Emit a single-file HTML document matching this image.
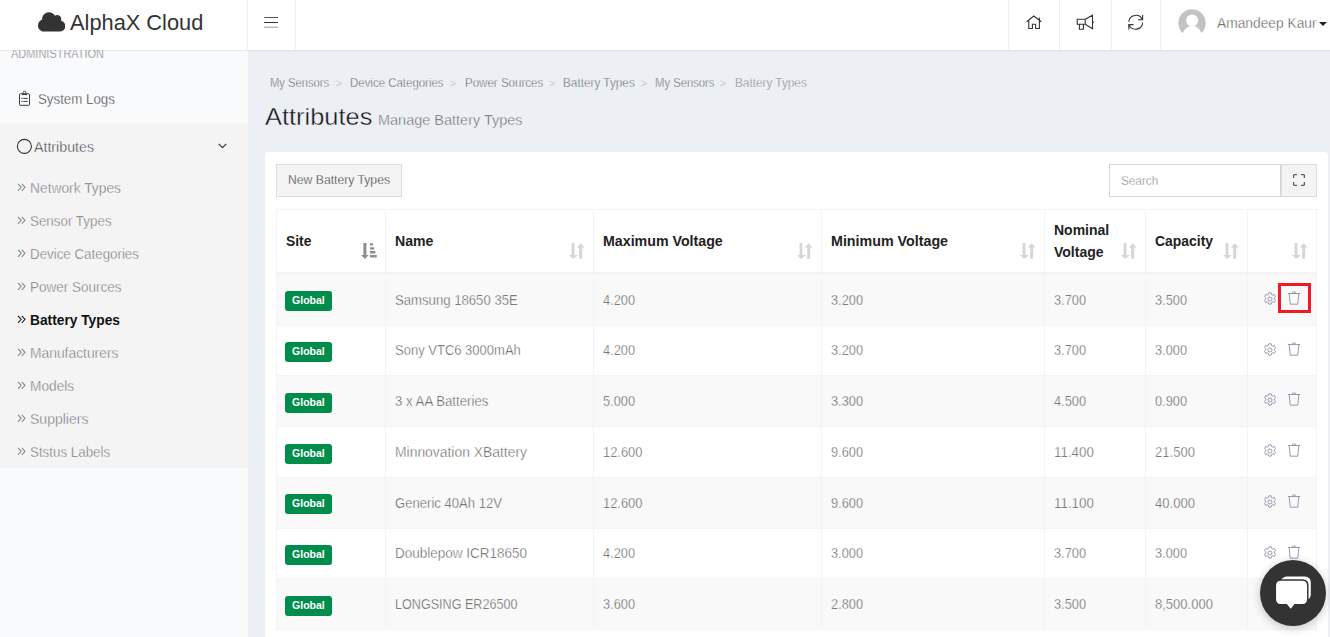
<!DOCTYPE html>
<html lang="en">
<head>
<meta charset="utf-8">
<title>AlphaX Cloud - Battery Types</title>
<style>
*{box-sizing:border-box;margin:0;padding:0}
html,body{width:1330px;height:637px;overflow:hidden}
body{font-family:"Liberation Sans",sans-serif;background:#ecf0f5;color:#333;position:relative}
.s{display:inline-block;transform-origin:0 50%;white-space:nowrap}
/* header */
#hdr{position:absolute;left:0;top:0;width:1330px;height:50px;background:#fff;z-index:5;box-shadow:0 1px 1px rgba(0,0,0,.06)}
#logo{position:absolute;left:0;top:0;width:248px;height:50px;border-right:1px solid #eee}
#logo .txt{position:absolute;left:70px;top:9.500px;font-size:22px;line-height:26px;color:#333;white-space:nowrap}
#logo svg{position:absolute;left:37.500px;top:10.500px}
.hb{position:absolute;top:0;height:50px;border-right:1px solid #eee}
.hl{border-left:1px solid #eee;border-right:none}
.hb svg{position:absolute}
#user{position:absolute;left:1160px;top:0;width:170px;height:50px;border-left:1px solid #eee}
#user .av{position:absolute;left:16.5px;top:8.700px}
#user .nm{position:absolute;left:55.6px;top:12.500px;font-size:14px;line-height:20px;color:#3c3c3c;-webkit-text-stroke:.42px #fff}
#user .caret{position:absolute;left:157.6px;top:21.8px;width:0;height:0;border-left:4.7px solid transparent;border-right:4.7px solid transparent;border-top:4.7px solid #222}
/* sidebar */
#side{position:absolute;left:0;top:50px;width:248px;height:587px;background:#f9fafc;overflow:hidden}
#side .sec{position:absolute;left:11px;top:-3.5px;font-size:12px;line-height:14px;color:#6a6a6a;-webkit-text-stroke:.4px #f9fafc}
#side .act{position:absolute;left:0;top:73px;width:248px;height:345px;background:#f4f4f5}
#side .it{position:absolute;left:0;font-size:15px;line-height:20px;color:#303030;white-space:nowrap;-webkit-text-stroke:.38px #f9fafc}
#side .sub{position:absolute;left:30px;font-size:15px;line-height:20px;color:#646464;white-space:nowrap;-webkit-text-stroke:.45px #f4f4f5}
#side .sub.on{color:#111;font-weight:bold;-webkit-text-stroke:0}
#side .ch{position:absolute;left:17px;font-size:15px;line-height:20px;color:#585858;-webkit-text-stroke:.45px #ecf0f5}
/* content */
#bc{position:absolute;left:0;top:74px;font-size:13px;line-height:18px;color:#484848;white-space:nowrap;-webkit-text-stroke:.45px #ecf0f5}
#bc .bi{position:absolute;top:0}
#bc .sep{color:#999;font-size:11px}
#bc .last{color:#6c6c6c}
#ttl{position:absolute;left:0;top:0;white-space:nowrap;color:#222}
#ttl .t1{position:absolute;left:264.500px;top:103px;font-size:24px;line-height:28px;-webkit-text-stroke:.4px #ecf0f5;color:#111}
#ttl .t2{position:absolute;left:378.400px;top:110px;font-size:15px;line-height:20px;color:#585858;-webkit-text-stroke:.45px #ecf0f5}
#card{position:absolute;left:265px;top:152px;width:1063px;height:500px;background:#fff;border-radius:3px}
#btn{position:absolute;left:276px;top:164px;width:126px;height:33px;background:#f4f4f4;border:1px solid #ddd;font-size:13px;line-height:30px;color:#333;text-align:left;padding-left:11px;-webkit-text-stroke:.3px #f4f4f4}
#srch{position:absolute;left:1109px;top:164px;width:172px;height:33px;background:#fff;border:1px solid #d2d6de;font-size:13px;line-height:31px;color:#777;padding-left:11px;-webkit-text-stroke:.4px #fff}
#fsb{position:absolute;left:1281px;top:164px;width:36px;height:33px;background:#f4f4f4;border:1px solid #ddd}

/* table */
#tbl{position:absolute;left:276px;top:209px;width:1041px;border-collapse:separate;border-spacing:0;table-layout:fixed;border-right:1px solid #f4f4f4;border-bottom:1px solid #f4f4f4;font-size:14px;color:#777}
#tbl th,#tbl td{border-left:1px solid #f4f4f4;border-top:1px solid #f4f4f4;text-align:left;position:relative;overflow:hidden;white-space:nowrap}
#tbl th{height:65px;border-bottom:2px solid #f4f4f4;padding:0 0 0 9px;vertical-align:middle;font-weight:bold;font-size:14px;line-height:22px;color:#222}
#tbl td{height:51px;line-height:20px;padding:15px 0 0 9px;vertical-align:top}
#tbl tr.r50 td{height:50px;padding-top:14px}
#tbl tr.r50 .bdg,#tbl tr.b2 .bdg{margin-top:2px}
#tbl td{color:#424242;-webkit-text-stroke:.45px #fff}
#tbl tbody tr:nth-child(odd) td{background:#f9f9f9;-webkit-text-stroke-color:#f9f9f9}
.bdg{-webkit-text-stroke:0}
#tbl th svg{position:absolute;right:8.3px;top:33.3px}
.bdg{display:block;width:47px;height:20px;margin:1px 0 0 -1.5px;background:#008d4c;border-radius:3px;color:#fff;font-weight:bold;font-size:10.5px;line-height:19px;text-align:left;padding-left:7.5px}
.ic{position:absolute;top:16.9px}
#hl{position:absolute;left:1278px;top:283px;width:33px;height:30px;border:3px solid #ed1c24}
#chat{position:absolute;left:1260px;top:560px;width:66px;height:66px;border-radius:50%;background:#333;box-shadow:0 2px 10px rgba(0,0,0,.22);z-index:9}
#chat svg{position:absolute;left:0;top:0}
</style>
</head>
<body>
<div id="hdr">
  <div id="logo">
    <svg width="27.400" height="21.920" viewBox="0 0 640 512"><path fill="#333" d="M537.600 226.600c4.100-10.700 6.400-22.400 6.400-34.600 0-53-43-96-96-96-19.700 0-38.100 6-53.300 16.200C367 64.200 315.300 32 256 32c-88.400 0-160 71.600-160 160 0 2.700.1 5.400.2 8.100C40.200 219.800 0 273.200 0 336c0 79.500 64.500 144 144 144h368c70.700 0 128-57.300 128-128 0-61.900-44-113.600-102.400-125.400z"/></svg>
    <div class="txt"><span class="s" style="transform:scaleX(0.991)">AlphaX Cloud</span></div>
  </div>
  <div class="hb" style="left:248px;width:48px"><svg style="left:16px;top:16px" width="14" height="13" viewBox="0 0 14 13"><rect x=".2" y="1" width="13.800" height="1" fill="#555"/><rect x=".2" y="6" width="13.800" height="1" fill="#333"/><rect x=".2" y="10.700" width="13.800" height="1" fill="#999"/></svg></div>
  <div class="hb hl" style="left:1008px;width:51px"></div>
  <div class="hb hl" style="left:1059px;width:52px"></div>
  <div class="hb hl" style="left:1111px;width:50px"></div>
<svg style="position:absolute;left:1010px;top:0" width="150" height="50" viewBox="1010 0 150 50" fill="none" stroke="#333" stroke-width="1.100" stroke-linejoin="miter">
<path d="M1026.600 21.700L1033.800 16l7.400 5.700M1028.800 20.300v8.200h3.600v-4.200h3.200v4.200h3.800v-8.200M1039.300 20v-2.600"/>
<path d="M1077.200 19.300h8v5h-8zM1085.200 19.300l7.300-4v13.500l-7.300-4.500M1079.400 24.400v4.800h4v-4.800M1092.600 21.400q1.400 .7 0 1.500"/>
<path d="M1128.800 21.800A7.100 7.100 0 0 1 1142.300 19.400M1142.600 15.100V19.800H1138M1142.700 22.600A7.100 7.100 0 0 1 1129.100 24.900M1128.800 29.500V24.600H1133.500"/>
</svg>
  <div id="user"><svg class="av" width="28" height="28" viewBox="0 0 28 28"><circle cx="14" cy="14" r="13.700" fill="#c3c3c3"/><g fill="#fff"><circle cx="14.100" cy="11.400" r="6"/><ellipse cx="14.100" cy="28.600" rx="10.300" ry="11.600"/></g></svg><div class="nm"><span class="s" style="transform:scaleX(0.984)">Amandeep Kaur</span></div><div class="caret"></div></div>
</div>
<div id="side">
  <div class="sec"><span class="s" style="transform:scaleX(0.914)">ADMINISTRATION</span></div>
  <div class="act"></div>

  <div class="it" style="left:38px;top:39px"><span class="s" style="transform:scaleX(0.886)">System Logs</span></div>
  <svg style="position:absolute;left:18px;top:40px" width="13" height="17" viewBox="0 0 13 17" fill="none" stroke="#3d3d3d" stroke-width="1"><rect x="1.5" y="3.8" width="10" height="11.5" rx=".8"/><path d="M5 3.800V2.700Q5 1.300 6.500 1.300T8 2.700V3.800" stroke-width=".9"/><path d="M4 4.400h5" stroke-width="1.300"/><path d="M3.200 8.400h1.300M5.300 8.400h4.400M3.200 11.400h1.300M5.300 11.400h4.400" stroke-width="1"/></svg>
  <svg style="position:absolute;left:16px;top:88px" width="17" height="17" viewBox="0 0 17 17" fill="none" stroke="#333" stroke-width="1.100"><circle cx="8.400" cy="8.400" r="7"/></svg>
  <div class="it" style="left:34px;top:87px"><span class="s" style="transform:scaleX(0.947)">Attributes</span></div>
  <svg style="position:absolute;left:218px;top:93px" width="9" height="6" viewBox="0 0 9 6" fill="none" stroke="#333" stroke-width="1.200"><path d="M.7 .8l3.800 3.800 3.800-3.800"/></svg>
  <svg style="position:absolute;left:17px;top:133px" width="9" height="9" viewBox="0 0 9 9" fill="none" stroke="#8a8a8a" stroke-width="1.100"><path d="M1 .8l3.200 3.500L1 7.800M4.800 .8L8 4.300 4.800 7.800"/></svg>
  <div class="sub" style="top:128px"><span class="s" style="transform:scaleX(0.920)">Network Types</span></div>
  <svg style="position:absolute;left:17px;top:166px" width="9" height="9" viewBox="0 0 9 9" fill="none" stroke="#8a8a8a" stroke-width="1.100"><path d="M1 .8l3.200 3.500L1 7.800M4.800 .8L8 4.300 4.800 7.800"/></svg>
  <div class="sub" style="top:161px"><span class="s" style="transform:scaleX(0.892)">Sensor Types</span></div>
  <svg style="position:absolute;left:17px;top:199px" width="9" height="9" viewBox="0 0 9 9" fill="none" stroke="#8a8a8a" stroke-width="1.100"><path d="M1 .8l3.200 3.500L1 7.800M4.800 .8L8 4.300 4.800 7.800"/></svg>
  <div class="sub" style="top:194px"><span class="s" style="transform:scaleX(0.889)">Device Categories</span></div>
  <svg style="position:absolute;left:17px;top:232px" width="9" height="9" viewBox="0 0 9 9" fill="none" stroke="#8a8a8a" stroke-width="1.100"><path d="M1 .8l3.200 3.500L1 7.800M4.800 .8L8 4.300 4.800 7.800"/></svg>
  <div class="sub" style="top:227px"><span class="s" style="transform:scaleX(0.899)">Power Sources</span></div>
  <svg style="position:absolute;left:17px;top:265px" width="9" height="9" viewBox="0 0 9 9" fill="none" stroke="#222" stroke-width="1.100"><path d="M1 .8l3.200 3.500L1 7.800M4.800 .8L8 4.300 4.800 7.800"/></svg>
  <div class="sub on" style="top:260px"><span class="s" style="transform:scaleX(0.917)">Battery Types</span></div>
  <svg style="position:absolute;left:17px;top:298px" width="9" height="9" viewBox="0 0 9 9" fill="none" stroke="#8a8a8a" stroke-width="1.100"><path d="M1 .8l3.200 3.500L1 7.800M4.800 .8L8 4.300 4.800 7.800"/></svg>
  <div class="sub" style="top:293px"><span class="s" style="transform:scaleX(0.922)">Manufacturers</span></div>
  <svg style="position:absolute;left:17px;top:331px" width="9" height="9" viewBox="0 0 9 9" fill="none" stroke="#8a8a8a" stroke-width="1.100"><path d="M1 .8l3.200 3.500L1 7.800M4.800 .8L8 4.300 4.800 7.800"/></svg>
  <div class="sub" style="top:326px"><span class="s" style="transform:scaleX(0.914)">Models</span></div>
  <svg style="position:absolute;left:17px;top:364px" width="9" height="9" viewBox="0 0 9 9" fill="none" stroke="#8a8a8a" stroke-width="1.100"><path d="M1 .8l3.200 3.500L1 7.800M4.800 .8L8 4.300 4.800 7.800"/></svg>
  <div class="sub" style="top:359px"><span class="s" style="transform:scaleX(0.935)">Suppliers</span></div>
  <svg style="position:absolute;left:17px;top:397px" width="9" height="9" viewBox="0 0 9 9" fill="none" stroke="#8a8a8a" stroke-width="1.100"><path d="M1 .8l3.200 3.500L1 7.800M4.800 .8L8 4.300 4.800 7.800"/></svg>
  <div class="sub" style="top:392px"><span class="s" style="transform:scaleX(0.890)">Ststus Labels</span></div>
</div>
<div id="bc"><span class="bi" style="left:270.4px"><span class="s" style="transform:scaleX(0.862)">My Sensors</span></span><span class="bi sep" style="left:336px"><span class="s" style="transform:scaleX(0.932)">&gt;</span></span><span class="bi" style="left:350.4px"><span class="s" style="transform:scaleX(0.881)">Device Categories</span></span><span class="bi sep" style="left:450px"><span class="s" style="transform:scaleX(0.932)">&gt;</span></span><span class="bi" style="left:464.5px"><span class="s" style="transform:scaleX(0.887)">Power Sources</span></span><span class="bi sep" style="left:548.8px"><span class="s" style="transform:scaleX(0.932)">&gt;</span></span><span class="bi" style="left:563.2px"><span class="s" style="transform:scaleX(0.906)">Battery Types</span></span><span class="bi sep" style="left:640.6px"><span class="s" style="transform:scaleX(0.932)">&gt;</span></span><span class="bi" style="left:655.4px"><span class="s" style="transform:scaleX(0.867)">My Sensors</span></span><span class="bi sep" style="left:720.3px"><span class="s" style="transform:scaleX(0.932)">&gt;</span></span><span class="bi last" style="left:735.4px"><span class="s" style="transform:scaleX(0.906)">Battery Types</span></span></div>
<div id="ttl"><span class="s t1" style="transform:scaleX(1.059)">Attributes</span><span class="s t2" style="transform:scaleX(0.965)">Manage Battery Types</span></div>
<div id="card"></div>
<div id="btn"><span class="s" style="transform:scaleX(0.937)">New Battery Types</span></div>
<div id="srch"><span class="s" style="transform:scaleX(0.903)">Search</span></div>
<div id="fsb"><svg style="position:absolute;left:10.700px;top:9.200px" width="12" height="12" viewBox="0 0 12 12" fill="none" stroke="#3a3a3a" stroke-width="1"><path d="M.7 4V.7H4M8 .7h3.300V4M11.300 8v3.300H8M4 11.300H.7V8"/></svg></div>
<table id="tbl"><colgroup><col style="width:109px"><col style="width:208px"><col style="width:228px"><col style="width:223px"><col style="width:101px"><col style="width:102px"><col style="width:69px"></colgroup>
<thead><tr><th><span class="s" style="transform:scaleX(0.989)">Site</span><svg style="right:7.700px;top:33.400px" width="16" height="16" viewBox="0 0 16 16" fill="#8e8e8e"><path d="M2.400 0h3v12h2.300L3.900 16 0 12h2.400zM9 .2h3v2.200H9zM9 4.200h4.200v2.200H9zM9 8.100h5.300v2.300H9zM9 12.100h6.800v2.500H9z"/></svg></th><th><span class="s" style="transform:scaleX(1.007)">Name</span><svg width="16" height="16" viewBox="0 0 16 16" fill="#d6d6d6"><path d="M2.600 0h2.800v12H9l-4.900 4L0 12h2.600zM7.800 4.500L11.700 .2l3.900 4.300H13.200V15.700H10.200V4.500z"/></svg></th><th><span class="s" style="transform:scaleX(1.015)">Maximum Voltage</span><svg width="16" height="16" viewBox="0 0 16 16" fill="#d6d6d6"><path d="M2.600 0h2.800v12H9l-4.900 4L0 12h2.600zM7.800 4.500L11.700 .2l3.900 4.300H13.200V15.700H10.200V4.500z"/></svg></th><th><span class="s" style="transform:scaleX(1.019)">Minimum Voltage</span><svg width="16" height="16" viewBox="0 0 16 16" fill="#d6d6d6"><path d="M2.600 0h2.800v12H9l-4.900 4L0 12h2.600zM7.800 4.500L11.700 .2l3.900 4.300H13.200V15.700H10.200V4.500z"/></svg></th><th><span class="s" style="transform:scaleX(1.000)">Nominal<br>Voltage</span><svg width="16" height="16" viewBox="0 0 16 16" fill="#d6d6d6"><path d="M2.600 0h2.800v12H9l-4.900 4L0 12h2.600zM7.800 4.500L11.700 .2l3.900 4.300H13.200V15.700H10.200V4.500z"/></svg></th><th><span class="s" style="transform:scaleX(0.994)">Capacity</span><svg width="16" height="16" viewBox="0 0 16 16" fill="#d6d6d6"><path d="M2.600 0h2.800v12H9l-4.900 4L0 12h2.600zM7.800 4.500L11.700 .2l3.900 4.300H13.200V15.700H10.200V4.500z"/></svg></th><th><span class="s" style="transform:scaleX(1.000)"></span><svg width="16" height="16" viewBox="0 0 16 16" fill="#d6d6d6"><path d="M2.600 0h2.800v12H9l-4.900 4L0 12h2.600zM7.800 4.500L11.700 .2l3.900 4.300H13.200V15.700H10.200V4.500z"/></svg></th></tr></thead>
<tbody>
<tr><td><span class="bdg"><span class="s" style="transform:scaleX(1.004)">Global</span></span></td><td><span class="s" style="transform:scaleX(0.939)">Samsung 18650 35E</span></td><td><span class="s" style="transform:scaleX(0.914)">4.200</span></td><td><span class="s" style="transform:scaleX(0.914)">3.200</span></td><td><span class="s" style="transform:scaleX(0.914)">3.700</span></td><td><span class="s" style="transform:scaleX(0.914)">3.500</span></td><td><svg class="ic" style="left:15px" width="14" height="14" viewBox="0 0 14 14" fill="none" stroke="#8b90a8" stroke-width=".9"><circle cx="7" cy="7" r="2"/><path d="M5.800 .8h2.400l.4 1.700 1.100 .6 1.600-.6 1.200 2.100-1.200 1.200v1.300l1.200 1.200-1.200 2.100-1.600-.6-1.100 .6-.4 1.700H5.800l-.4-1.700-1.100-.6-1.600 .6-1.200-2.100 1.200-1.200V5.800L1.500 4.600l1.200-2.100 1.600 .6 1.100-.6z"/></svg><svg class="ic" style="left:39px;top:16px" width="14" height="14" viewBox="0 0 14 14" fill="none" stroke="#8b90a8" stroke-width=".9"><path d="M1 2.500h12M5.200 2.300Q5.200 .9 7 .9T8.800 2.300M2.200 2.600l1 10.600h7.600l1-10.600"/></svg></td></tr>
<tr class="r50"><td><span class="bdg"><span class="s" style="transform:scaleX(1.004)">Global</span></span></td><td><span class="s" style="transform:scaleX(0.929)">Sony VTC6 3000mAh</span></td><td><span class="s" style="transform:scaleX(0.914)">4.200</span></td><td><span class="s" style="transform:scaleX(0.914)">3.200</span></td><td><span class="s" style="transform:scaleX(0.914)">3.700</span></td><td><span class="s" style="transform:scaleX(0.914)">3.000</span></td><td><svg class="ic" style="left:15px" width="14" height="14" viewBox="0 0 14 14" fill="none" stroke="#8b90a8" stroke-width=".9"><circle cx="7" cy="7" r="2"/><path d="M5.800 .8h2.400l.4 1.700 1.100 .6 1.600-.6 1.200 2.100-1.200 1.200v1.300l1.200 1.200-1.200 2.100-1.600-.6-1.100 .6-.4 1.700H5.800l-.4-1.700-1.100-.6-1.600 .6-1.200-2.100 1.200-1.200V5.800L1.500 4.600l1.200-2.100 1.600 .6 1.100-.6z"/></svg><svg class="ic" style="left:39px;top:16px" width="14" height="14" viewBox="0 0 14 14" fill="none" stroke="#8b90a8" stroke-width=".9"><path d="M1 2.500h12M5.200 2.300Q5.200 .9 7 .9T8.800 2.300M2.200 2.600l1 10.600h7.600l1-10.600"/></svg></td></tr>
<tr class="b2"><td><span class="bdg"><span class="s" style="transform:scaleX(1.004)">Global</span></span></td><td><span class="s" style="transform:scaleX(0.945)">3 x AA Batteries</span></td><td><span class="s" style="transform:scaleX(0.914)">5.000</span></td><td><span class="s" style="transform:scaleX(0.914)">3.300</span></td><td><span class="s" style="transform:scaleX(0.914)">4.500</span></td><td><span class="s" style="transform:scaleX(0.914)">0.900</span></td><td><svg class="ic" style="left:15px" width="14" height="14" viewBox="0 0 14 14" fill="none" stroke="#8b90a8" stroke-width=".9"><circle cx="7" cy="7" r="2"/><path d="M5.800 .8h2.400l.4 1.700 1.100 .6 1.600-.6 1.200 2.100-1.200 1.200v1.300l1.200 1.200-1.200 2.100-1.600-.6-1.100 .6-.4 1.700H5.800l-.4-1.700-1.100-.6-1.600 .6-1.200-2.100 1.200-1.200V5.800L1.500 4.600l1.200-2.100 1.600 .6 1.100-.6z"/></svg><svg class="ic" style="left:39px;top:16px" width="14" height="14" viewBox="0 0 14 14" fill="none" stroke="#8b90a8" stroke-width=".9"><path d="M1 2.500h12M5.200 2.300Q5.200 .9 7 .9T8.800 2.300M2.200 2.600l1 10.600h7.600l1-10.600"/></svg></td></tr>
<tr class="b2"><td><span class="bdg"><span class="s" style="transform:scaleX(1.004)">Global</span></span></td><td><span class="s" style="transform:scaleX(0.992)">Minnovation XBattery</span></td><td><span class="s" style="transform:scaleX(0.922)">12.600</span></td><td><span class="s" style="transform:scaleX(0.914)">9.600</span></td><td><span class="s" style="transform:scaleX(0.955)">11.400</span></td><td><span class="s" style="transform:scaleX(0.932)">21.500</span></td><td><svg class="ic" style="left:15px" width="14" height="14" viewBox="0 0 14 14" fill="none" stroke="#8b90a8" stroke-width=".9"><circle cx="7" cy="7" r="2"/><path d="M5.800 .8h2.400l.4 1.700 1.100 .6 1.600-.6 1.200 2.100-1.200 1.200v1.300l1.200 1.200-1.200 2.100-1.600-.6-1.100 .6-.4 1.700H5.800l-.4-1.700-1.100-.6-1.600 .6-1.200-2.100 1.200-1.200V5.800L1.500 4.600l1.200-2.100 1.600 .6 1.100-.6z"/></svg><svg class="ic" style="left:39px;top:16px" width="14" height="14" viewBox="0 0 14 14" fill="none" stroke="#8b90a8" stroke-width=".9"><path d="M1 2.500h12M5.200 2.300Q5.200 .9 7 .9T8.800 2.300M2.200 2.600l1 10.600h7.600l1-10.600"/></svg></td></tr>
<tr><td><span class="bdg"><span class="s" style="transform:scaleX(1.004)">Global</span></span></td><td><span class="s" style="transform:scaleX(0.935)">Generic 40Ah 12V</span></td><td><span class="s" style="transform:scaleX(0.922)">12.600</span></td><td><span class="s" style="transform:scaleX(0.914)">9.600</span></td><td><span class="s" style="transform:scaleX(0.955)">11.100</span></td><td><span class="s" style="transform:scaleX(0.932)">40.000</span></td><td><svg class="ic" style="left:15px" width="14" height="14" viewBox="0 0 14 14" fill="none" stroke="#8b90a8" stroke-width=".9"><circle cx="7" cy="7" r="2"/><path d="M5.800 .8h2.400l.4 1.700 1.100 .6 1.600-.6 1.200 2.100-1.200 1.200v1.300l1.200 1.200-1.200 2.100-1.600-.6-1.100 .6-.4 1.700H5.800l-.4-1.700-1.100-.6-1.600 .6-1.200-2.100 1.200-1.200V5.800L1.500 4.600l1.200-2.100 1.600 .6 1.100-.6z"/></svg><svg class="ic" style="left:39px;top:16px" width="14" height="14" viewBox="0 0 14 14" fill="none" stroke="#8b90a8" stroke-width=".9"><path d="M1 2.500h12M5.200 2.300Q5.200 .9 7 .9T8.800 2.300M2.200 2.600l1 10.600h7.600l1-10.600"/></svg></td></tr>
<tr class="r50"><td><span class="bdg"><span class="s" style="transform:scaleX(1.004)">Global</span></span></td><td><span class="s" style="transform:scaleX(0.964)">Doublepow ICR18650</span></td><td><span class="s" style="transform:scaleX(0.914)">4.200</span></td><td><span class="s" style="transform:scaleX(0.914)">3.000</span></td><td><span class="s" style="transform:scaleX(0.914)">3.700</span></td><td><span class="s" style="transform:scaleX(0.914)">3.000</span></td><td><svg class="ic" style="left:15px" width="14" height="14" viewBox="0 0 14 14" fill="none" stroke="#8b90a8" stroke-width=".9"><circle cx="7" cy="7" r="2"/><path d="M5.800 .8h2.400l.4 1.700 1.100 .6 1.600-.6 1.200 2.100-1.200 1.200v1.300l1.200 1.200-1.200 2.100-1.600-.6-1.100 .6-.4 1.700H5.800l-.4-1.700-1.100-.6-1.600 .6-1.200-2.100 1.200-1.200V5.800L1.500 4.600l1.200-2.100 1.600 .6 1.100-.6z"/></svg><svg class="ic" style="left:39px;top:16px" width="14" height="14" viewBox="0 0 14 14" fill="none" stroke="#8b90a8" stroke-width=".9"><path d="M1 2.500h12M5.200 2.300Q5.200 .9 7 .9T8.800 2.300M2.200 2.600l1 10.600h7.600l1-10.600"/></svg></td></tr>
<tr class="b2"><td><span class="bdg"><span class="s" style="transform:scaleX(1.004)">Global</span></span></td><td><span class="s" style="transform:scaleX(0.899)">LONGSING ER26500</span></td><td><span class="s" style="transform:scaleX(0.914)">3.600</span></td><td><span class="s" style="transform:scaleX(0.914)">2.800</span></td><td><span class="s" style="transform:scaleX(0.914)">3.500</span></td><td><span class="s" style="transform:scaleX(0.929)">8,500.000</span></td><td><svg class="ic" style="left:15px" width="14" height="14" viewBox="0 0 14 14" fill="none" stroke="#8b90a8" stroke-width=".9"><circle cx="7" cy="7" r="2"/><path d="M5.800 .8h2.400l.4 1.700 1.100 .6 1.600-.6 1.200 2.100-1.200 1.200v1.300l1.200 1.200-1.200 2.100-1.600-.6-1.100 .6-.4 1.700H5.800l-.4-1.700-1.100-.6-1.600 .6-1.200-2.100 1.200-1.200V5.800L1.500 4.600l1.200-2.100 1.600 .6 1.100-.6z"/></svg><svg class="ic" style="left:39px;top:16px" width="14" height="14" viewBox="0 0 14 14" fill="none" stroke="#8b90a8" stroke-width=".9"><path d="M1 2.500h12M5.200 2.300Q5.200 .9 7 .9T8.800 2.300M2.200 2.600l1 10.600h7.600l1-10.600"/></svg></td></tr>
</tbody></table>
<div id="hl"></div>
<div id="chat"><svg width="66" height="66" viewBox="0 0 66 66"><rect x="21" y="16.600" width="29.800" height="23.500" rx="5.500" fill="#fff"/><path fill="#fff" stroke="#333" stroke-width="1.500" d="M20.800 19.900h21.500c3.400 0 5.500 2.100 5.500 5.500v13.900c0 3.400-2.100 5.500-5.500 5.500h-7.400l-4.200 5.200-4.200-5.200h-5.700c-3.400 0-5.500-2.100-5.500-5.500V25.400c0-3.400 2.100-5.500 5.500-5.500z"/></svg></div>

</body>
</html>
